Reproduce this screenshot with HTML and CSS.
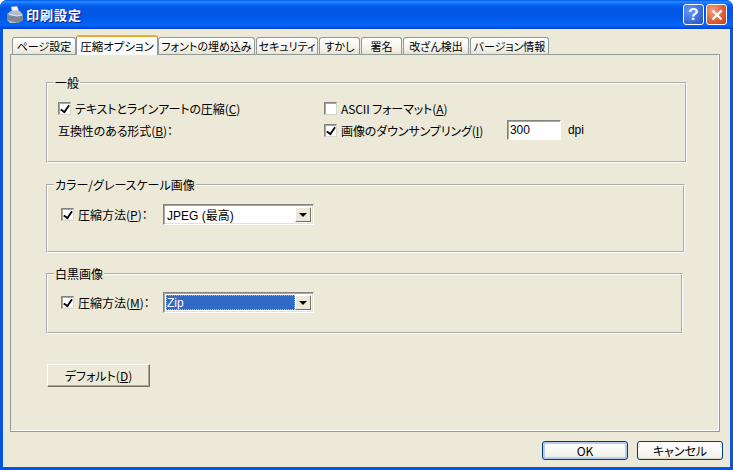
FILE: index.html
```html
<!DOCTYPE html>
<html lang="ja">
<head>
<meta charset="utf-8">
<title>印刷設定</title>
<link rel="stylesheet" href="styles.css">
</head>
<body>
<div class="window">
  <header class="titlebar">
    <svg class="app-icon" width="18" height="18" viewBox="0 0 18 18">
      <path d="M5 1l6-1 2 5H6z" fill="#f4f6fa" stroke="#8a98b0" stroke-width=".7"/>
      <path d="M1 8l4-3h9l3 4v5l-5 3H4l-3-3z" fill="#b4bcc8"/>
      <path d="M1 8l10 2 6-1v5l-5 3-11-3z" fill="#7d8796"/>
      <path d="M3 8.5l8 1.5 5-1" fill="none" stroke="#e6eaf0" stroke-width="1"/>
    </svg>
    <span class="title">印刷設定</span>
    <button class="cap cap-help" aria-label="ヘルプ">?</button>
    <button class="cap cap-close" aria-label="閉じる">
      <svg width="12" height="12" viewBox="0 0 12 12"><path d="M1.5 1.5l9 9M10.5 1.5l-9 9" stroke="#fff" stroke-width="2.4"/></svg>
    </button>
  </header>
  <div class="client">
    <nav class="tabs">
      <span class="tab t1">ページ設定</span>
      <span class="tab tab-active t2">圧縮オプション</span>
      <span class="tab t3">フォントの埋め込み</span>
      <span class="tab t4">セキュリティ</span>
      <span class="tab t5">すかし</span>
      <span class="tab t6">署名</span>
      <span class="tab t7">改ざん検出</span>
      <span class="tab t8">バージョン情報</span>
    </nav>
    <main class="panel">
      <fieldset class="group g1">
        <legend>一般</legend>
        <div class="general">
          <label class="check"><span class="box on"></span>テキストとラインアートの圧縮(<u>C</u>)</label>
          <label class="check"><span class="box"></span>ASCII フォーマット(<u>A</u>)</label>
          <span class="plain">互換性のある形式(<u>B</u>)：</span>
          <div class="check-row">
            <label class="check check-fixed"><span class="box on"></span>画像のダウンサンプリング(<u>I</u>)</label>
            <span class="textbox">300</span>
            <span class="unit">dpi</span>
          </div>
        </div>
      </fieldset>
      <fieldset class="group g2">
        <legend>カラー/グレースケール画像</legend>
        <div class="method">
          <label class="check"><span class="box on"></span>圧縮方法(<u>P</u>)：</label>
          <div class="combo"><span class="combo-value">JPEG (最高)</span><span class="combo-arrow"></span></div>
        </div>
      </fieldset>
      <fieldset class="group g3">
        <legend>白黒画像</legend>
        <div class="method">
          <label class="check"><span class="box on"></span>圧縮方法(<u>M</u>)：</label>
          <div class="combo"><span class="combo-value selected">Zip</span><span class="combo-arrow"></span></div>
        </div>
      </fieldset>
      <button class="classic">デフォルト(<u>D</u>)</button>
    </main>
    <footer class="actions">
      <button class="xp xp-default">OK</button>
      <button class="xp">キャンセル</button>
    </footer>
  </div>
</div>
</body>
</html>
```
FILE: styles.css
```css
* { box-sizing: border-box; }
html, body { margin: 0; background: #fff; }
body {
  width: 733px;
  height: 470px;
  overflow: hidden;
  font-family: "Noto Sans CJK JP", "Liberation Sans", sans-serif;
  font-size: 12px;
  font-feature-settings: "palt";
  color: #000;
}
.window {
  width: 733px;
  height: 470px;
  display: flex;
  flex-direction: column;
  border-radius: 7px 7px 0 0;
  overflow: hidden;
  background: #0855dd;
}
.titlebar {
  height: 29px;
  flex: none;
  display: flex;
  align-items: center;
  padding: 1px 6px 1px 6px;
  background: linear-gradient(to bottom, #0058ee 0, #2a8cff 2px, #0a6af5 4px, #0055e5 8px, #0058e8 18px, #0566f8 25px, #0055ea 27px, #003dd0 29px);
}
.app-icon { flex: none; margin-right: 2px; }
.title {
  flex: 1;
  font-size: 13px;
  font-weight: 700;
  letter-spacing: 1px;
  color: #fff;
  text-shadow: 1px 1px 0 #0f1e80;
  font-feature-settings: normal;
}
.cap {
  width: 21px;
  height: 21px;
  flex: none;
  margin: 0 0 0 2px;
  padding: 0;
  border: 1px solid #fff;
  border-radius: 3px;
  display: flex;
  align-items: center;
  justify-content: center;
  font: 700 17px/1 "Liberation Sans", sans-serif;
  color: #fff;
}
.cap-help { background: radial-gradient(circle at 30% 30%, #6d97f2, #3c6fe0 55%, #2a50c0); }
.cap-close { background: radial-gradient(circle at 30% 30%, #f0a080, #e0603c 55%, #c03c18); }
.client {
  flex: 1;
  min-height: 0;
  margin: 0 3px 3px 3px;
  padding: 6px 10px 0 7px;
  background: #ece9d8;
  display: flex;
  flex-direction: column;
}
.tabs {
  height: 19px;
  flex: none;
  display: flex;
  align-items: flex-end;
  padding-left: 2px;
  position: relative;
  z-index: 1;
}
.tab {
  height: 17px;
  flex: none;
  display: flex;
  align-items: center;
  justify-content: center;
  white-space: nowrap;
  font-size: 11px;
  margin-right: 1px;
  border: 1px solid #919b9c;
  border-bottom: 0;
  border-radius: 3px 3px 0 0;
  background: linear-gradient(to bottom, #fff, #f3f1e8 70%, #e6e3d3);
}
.t1 { width: 64px; margin-right: 0; }
.t2 { width: 82px; margin-right: 0; }
.t3 { width: 97px; }
.t4 { width: 62px; }
.t5 { width: 41px; }
.t6 { width: 41px; }
.t7 { width: 66px; }
.t8 { width: 79px; }
.tab-active {
  height: 20px;
  margin-bottom: -1px;
  font-size: 11.5px;
  border-color: #919b9c;
  border-top: 2px solid #f0a92c;
  background: #fcfcfa;
}
.panel {
  height: 378px;
  flex: none;
  padding: 20px 0 0 35px;
  border: 1px solid #919b9c;
  box-shadow: inset -1px -1px 0 #fff;
  display: flex;
  flex-direction: column;
  align-items: flex-start;
}
.group {
  margin: 0;
  padding: 0;
  min-width: 0;
  border: 2px groove #fff;
  flex: none;
}
.group legend {
  margin-left: 6px;
  padding: 0 1px;
  height: 16px;
  line-height: 16px;
}
.g1 { width: 641px; height: 88px; margin-bottom: 14px; }
.g2 { width: 639px; height: 76px; margin-bottom: 13px; }
.g3 { width: 637px; height: 68px; margin-bottom: 30px; }
.general {
  display: grid;
  grid-template-columns: 266px 1fr;
  grid-auto-rows: 22px;
  align-items: center;
  padding: 6px 0 0 10px;
  letter-spacing: -0.1px;
}
.check { display: flex; align-items: center; white-space: nowrap; }
.check-row { display: flex; align-items: center; }
.check-fixed { width: 183px; }
.box {
  width: 13px;
  height: 13px;
  flex: none;
  margin-right: 4px;
  background: #fff;
  border: 1px solid;
  border-color: #85847c #d8d6c8 #d8d6c8 #85847c;
  box-shadow: inset 1px 1px 0 #a8a69a;
  position: relative;
}
.box.on::after {
  content: "";
  position: absolute;
  left: 3px;
  top: 0;
  width: 4px;
  height: 8px;
  border: solid #000;
  border-width: 0 2px 2px 0;
  transform: rotate(35deg) scale(.9);
}
.plain { white-space: nowrap; }
.textbox {
  width: 54px;
  height: 20px;
  padding-left: 2px;
  display: flex;
  align-items: center;
  font-family: "Liberation Sans", sans-serif;
  background: #fff;
  border: 1px solid;
  border-color: #85847c #fff #fff #85847c;
  box-shadow: inset 1px 1px 0 #a8a69a;
}
.unit { margin-left: 7px; font-family: "Liberation Sans", sans-serif; }
.method {
  display: flex;
  align-items: center;
  padding: 11px 0 0 13px;
}
.g3 .method { padding-top: 10px; }
.method .check { width: 102px; }
.combo {
  width: 151px;
  height: 21px;
  padding: 2px;
  display: flex;
  align-items: stretch;
  background: #fff;
  border: 1px solid;
  border-color: #85847c #fff #fff #85847c;
  box-shadow: inset 1px 1px 0 #a8a69a, inset -1px -1px 0 #e4e2d4;
}
.combo-value {
  flex: 1;
  padding-left: 1px;
  display: flex;
  align-items: center;
  font-family: "Liberation Sans", "Noto Sans CJK JP", sans-serif;
}
.combo-value.selected {
  color: #fff;
  background: #316ac5;
  outline: 1px dotted #ffb000;
  outline-offset: -1px;
}
.combo-arrow {
  width: 16px;
  flex: none;
  background: #ece9d8;
  border: 1px solid;
  border-color: #fff #716f64 #716f64 #fff;
  display: flex;
  align-items: center;
  justify-content: center;
}
.combo-arrow::after {
  content: "";
  border: solid transparent;
  border-width: 4px 4px 0;
  border-top-color: #000;
}
.classic {
  width: 103px;
  height: 23px;
  margin-left: 1px;
  padding: 0;
  font: inherit;
  font-feature-settings: inherit;
  background: #ece9d8;
  border: 1px solid;
  border-color: #fff #716f64 #716f64 #fff;
  box-shadow: inset -1px -1px 0 #aca899;
}
.actions {
  flex: 1;
  display: flex;
  justify-content: flex-end;
  align-items: flex-start;
  gap: 9px;
  padding-top: 9px;
  margin-right: -3px;
}
.xp {
  width: 86px;
  height: 19px;
  padding: 0;
  font: inherit;
  font-feature-settings: inherit;
  border: 1px solid #003c74;
  border-radius: 3px;
  background: linear-gradient(to bottom, #fff, #f4f3ee 85%, #dcd8cc);
}
.xp-default {
  box-shadow: inset 0 0 0 2px #b4cdf0;
  background: linear-gradient(to bottom, #fff, #f1f1ec 85%, #dcd8cc);
}
```
